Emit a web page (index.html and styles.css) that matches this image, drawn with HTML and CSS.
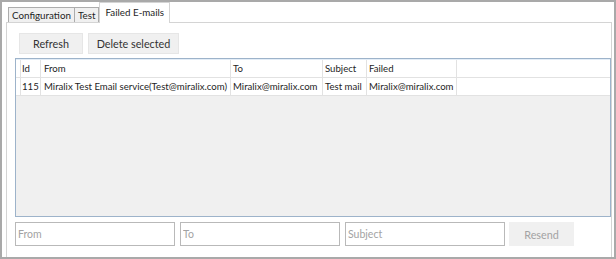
FILE: index.html
```html
<!DOCTYPE html>
<html lang="en">
  <head>
    <meta charset="UTF-8" />
    <title>Failed E-mails</title>
    <link rel="stylesheet" href="styles.css">
  </head>
  <body>
    <div class="window">
      <div class="tabs">
        <div class="tab">Configuration</div>
        <div class="tab">Test</div>
        <div class="tab active">Failed E-mails</div>
      </div>

      <div class="panel">
        <div class="toolbar">
          <button type="button" class="btn refresh">Refresh</button>
          <button type="button" class="btn delete">Delete selected</button>
        </div>

        <!-- failed mails grid -->
        <div class="grid">
          <div class="row head">
            <div class="cell rh"></div>
            <div class="cell c-id">Id</div>
            <div class="cell c-from">From</div>
            <div class="cell c-to">To</div>
            <div class="cell c-subject">Subject</div>
            <div class="cell c-failed">Failed</div>
            <div class="cell fill"></div>
          </div>
          <div class="row">
            <div class="cell rh"></div>
            <div class="cell c-id">115</div>
            <div class="cell c-from">Miralix Test Email service(Test@miralix.com)</div>
            <div class="cell c-to">Miralix@miralix.com</div>
            <div class="cell c-subject">Test mail</div>
            <div class="cell c-failed">Miralix@miralix.com</div>
            <div class="cell fill"></div>
          </div>
        </div>

        <div class="resend-form">
          <input type="text" class="field" placeholder="From" />
          <input type="text" class="field" placeholder="To" />
          <input type="text" class="field" placeholder="Subject" />
          <button type="button" class="btn resend" disabled>Resend</button>
        </div>
      </div>
    </div>
  </body>
</html>
```

FILE: styles.css
```css
body {
  margin: 0;
  background-color: #ffffff;
  font-family: Lato, "Open Sans", sans-serif;
  font-size: 9.6px;
  color: #1e1e1e;
}

.window {
  width: 616px;
  height: 259px;
  box-sizing: border-box;
  border: 2px solid #a9a9a9;
  display: flex;
  flex-direction: column;
  overflow: hidden;
}

.tabs {
  display: flex;
  align-items: flex-end;
  height: 20px;
  padding-left: 6px;
}

.tab {
  box-sizing: border-box;
  height: 15px;
  line-height: 14px;
  padding: 0 3px;
  font-size: 9.8px;
  border: 1px solid #acacac;
  border-bottom: none;
  background-color: #f0f0f0;
  margin-left: -1px;
}

.tab:first-child {
  margin-left: 0;
}

.tab.active {
  height: 21px;
  line-height: 19px;
  padding: 0 5px;
  margin-bottom: -1px;
  margin-left: 0;
  background-color: #ffffff;
  border-color: #d4d4d4;
  position: relative;
}

.panel {
  flex: 1;
  margin: 0 2px 0 4px;
  border: 1px solid #d4d4d4;
  border-bottom: none;
  display: flex;
  flex-direction: column;
}

.toolbar {
  display: flex;
  gap: 5px;
  margin: 10px 0 0 12px;
}

.btn {
  box-sizing: border-box;
  height: 21px;
  padding: 0;
  font-family: inherit;
  font-size: 10.8px;
  color: #333333;
  background-color: #f0f0f0;
  border: 1px solid #e6e6e6;
}

.refresh {
  width: 64px;
}

.delete {
  width: 91px;
}

.grid {
  box-sizing: border-box;
  height: 159px;
  margin: 4px 0 0 8px;
  border: 1px solid #9db3ca;
  background-color: #f0f0f0;
}

.row {
  display: grid;
  grid-template-columns: 5px 20px 190px 92px 44px 90px 1fr;
  height: 17px;
  background-color: #ffffff;
  border-bottom: 1px solid #e2e2e2;
}

.row.head {
  height: 17px;
  border-top: 1px solid #e3edf7;
}

.cell {
  padding: 0 2px;
  line-height: 17px;
  white-space: nowrap;
  overflow: hidden;
  border-right: 1px solid #e2e2e2;
}

.cell.rh {
  padding: 0;
}

.cell.fill {
  border-right: none;
}

.c-id {
  padding-left: 1px;
}

.c-from {
  padding-left: 3px;
}

.resend-form {
  display: flex;
  gap: 5px;
  margin: 5px 0 0 8px;
}

.field {
  box-sizing: border-box;
  width: 160px;
  height: 24px;
  padding: 0 2px;
  margin: 0;
  font-family: inherit;
  font-size: 10.5px;
  border: 1px solid #b9b9b9;
  outline: none;
}

.field::placeholder {
  color: #a3a3a3;
}

.resend {
  width: 65px;
  height: 24px;
  margin-left: -1px;
  color: #a3a3a3;
  border-color: #f0f0f0;
}
```
